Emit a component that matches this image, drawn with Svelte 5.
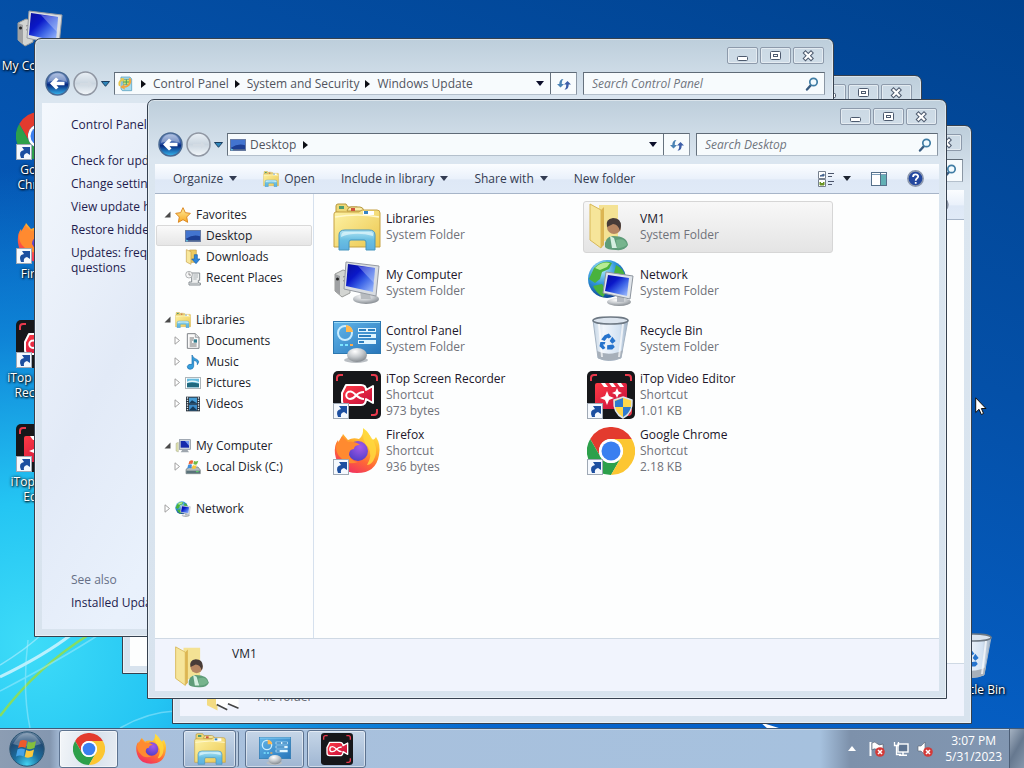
<script>
  const favorites = [
    { label: 'Desktop', icon: 'desktop', selected: true },
    { label: 'Downloads', icon: 'download' },
    { label: 'Recent Places', icon: 'recent' }
  ];
  const libraries = [
    { label: 'Documents', icon: 'document' },
    { label: 'Music', icon: 'music' },
    { label: 'Pictures', icon: 'picture' },
    { label: 'Videos', icon: 'video' }
  ];
  const tree = [
    { label: 'Favorites', icon: 'star', open: true, items: favorites },
    { label: 'Libraries', icon: 'libraries', open: true, items: libraries, expandable: true },
    { label: 'My Computer', icon: 'pc', open: true, items: [{ label: 'Local Disk (C:)', icon: 'disk' }], expandable: true },
    { label: 'Network', icon: 'network', open: false, items: [] }
  ];
  const files = [
    { name: 'Libraries', lines: ['System Folder'], icon: 'libraries' },
    { name: 'VM1', lines: ['System Folder'], icon: 'user', selected: true },
    { name: 'My Computer', lines: ['System Folder'], icon: 'computer' },
    { name: 'Network', lines: ['System Folder'], icon: 'network' },
    { name: 'Control Panel', lines: ['System Folder'], icon: 'cpanel' },
    { name: 'Recycle Bin', lines: ['System Folder'], icon: 'bin' },
    { name: 'iTop Screen Recorder', lines: ['Shortcut', '973 bytes'], icon: 'recorder', shortcut: true },
    { name: 'iTop Video Editor', lines: ['Shortcut', '1.01 KB'], icon: 'editor', shortcut: true, shield: true },
    { name: 'Firefox', lines: ['Shortcut', '936 bytes'], icon: 'firefox', shortcut: true },
    { name: 'Google Chrome', lines: ['Shortcut', '2.18 KB'], icon: 'chrome', shortcut: true }
  ];
  const shortcuts = [
    { label: 'My Computer', icon: 'computer' },
    { label: 'Google Chrome', icon: 'chrome', shortcut: true },
    { label: 'Firefox', icon: 'firefox', shortcut: true },
    { label: 'iTop Screen Recorder', icon: 'recorder', shortcut: true },
    { label: 'iTop Video Editor', icon: 'editor', shortcut: true }
  ];
  const tasks = ['Check for updates', 'Change settings', 'View update history', 'Restore hidden updates', 'Updates: frequently asked questions'];
</script>

{#snippet icon(name, cls)}
  <svg class={cls} viewBox="0 0 48 48" aria-hidden="true"><use href="#i-{name}" /></svg>
{/snippet}

{#snippet bigIcon(item)}
  <svg class="big" viewBox="0 0 48 48" aria-hidden="true">
    <use href="#i-{item.icon}" />
    {#if item.shield}<use href="#i-shield" />{/if}
    {#if item.shortcut}<use href="#i-shortcut" />{/if}
  </svg>
{/snippet}

{#snippet caret()}
  <svg class="caret" viewBox="0 0 8 5" aria-hidden="true"><path d="M0 0H8L4 5Z" fill="currentColor" /></svg>
{/snippet}

{#snippet crumbArrow()}
  <svg class="crumb-arrow" viewBox="0 0 5 8" aria-hidden="true"><path d="M0 0L5 4L0 8Z" fill="#0b0e14" /></svg>
{/snippet}

{#snippet chromeBar(place, crumbs, placeIcon)}
  <header class="titlebar">
    <button aria-label="Minimize"><svg viewBox="0 0 30 17"><rect x="10.500" y="9.500" width="10" height="4" rx="1" fill="#fff" stroke="#4d5a6e" /></svg></button>
    <button aria-label="Maximize"><svg viewBox="0 0 30 17"><rect x="10.500" y="4.500" width="10" height="8" rx="1" fill="#fff" stroke="#4d5a6e" /><rect x="13.500" y="7.500" width="4" height="2" fill="#fff" stroke="#4d5a6e" /></svg></button>
    <button aria-label="Close"><svg viewBox="0 0 30 17"><path d="M12.500 6L18 11.500M18 6L12.500 11.500" stroke="#4d5a6e" stroke-width="4.200" stroke-linecap="square" /><path d="M12.500 6L18 11.500M18 6L12.500 11.500" stroke="#fff" stroke-width="2.200" stroke-linecap="square" /></svg></button>
  </header>
  <div class="navrow">
    <div class="travel">
      <button class="back" aria-label="Back"><svg viewBox="0 0 25 25"><circle cx="12.500" cy="12.500" r="11.500" fill="url(#g-back)" stroke="#4a6a94" stroke-width="1.500" /><path d="M3 11C4 5 8 2.500 12.500 2.500S21 5 22 11C16 8.500 9 9 3 11Z" fill="#fff" opacity=".35" /><path d="M5 12.500L11 6.500L13.500 8.500L11.500 10.700H19.500V14.300H11.500L13.500 16.500L11 18.500Z" fill="#fff" /></svg></button>
      <button class="forward" aria-label="Forward"><svg viewBox="0 0 25 25"><circle cx="12.500" cy="12.500" r="11.500" fill="url(#g-fwd)" stroke="#9097a3" stroke-width="1.500" /><path d="M19 13L15 9.500V12H7V14H15V16.500Z" fill="#d3dbe3" /></svg></button>
      <button class="recent" aria-label="Recent pages"><svg viewBox="0 0 9 6"><path d="M.5.5H8.500L4.500 5.300Z" fill="#2e86bb" stroke="#1c3e60" /></svg></button>
    </div>
    <nav class="address" aria-label="Address">
      {@render icon(placeIcon, 'sm')}
      {#each crumbs as c, i}
        {#if i > 0 || crumbs.length > 1}{@render crumbArrow()}{/if}
        <a href="#{c}">{c}</a>
      {/each}
      {#if crumbs.length === 1}{@render crumbArrow()}{/if}
      <span class="fill"></span>
      <button class="drop" aria-label="Previous locations">{@render caret()}</button>
      <button class="refresh" aria-label="Refresh"><svg viewBox="0 0 16 16"><path d="M1 8L4.500 11.500L8 8H5.800C5.800 5.500 6 4.500 7.500 3C4.500 3 3.300 5 3.300 8Z" fill="#4a82b4" /><path d="M15 8.500L11.500 5L8 8.500H10.200C10.200 11 10 12 8.500 13.700C11.500 13.500 12.700 11.500 12.700 8.500Z" fill="#3d5ea8" /></svg></button>
    </nav>
    <label class="search">
      <input type="text" placeholder={place} aria-label={place || 'Search'} />
      <svg viewBox="0 0 14 14" aria-hidden="true"><path d="M6 8L2 12.500" stroke="#385b80" stroke-width="2.400" stroke-linecap="round" /><circle cx="8.500" cy="5" r="3.700" fill="#f2fbff" stroke="#407da4" stroke-width="1.700" /></svg>
    </label>
  </div>
{/snippet}

<svg class="defs" aria-hidden="true">
  <defs>
    <linearGradient id="g-back" x1="0" y1="0" x2="0" y2="1"><stop offset="0" stop-color="#93abd6" /><stop offset=".45" stop-color="#2a52a4" /><stop offset=".55" stop-color="#07297e" /><stop offset="1" stop-color="#37b8f0" /></linearGradient>
    <linearGradient id="g-fwd" x1="0" y1="0" x2="0" y2="1"><stop offset="0" stop-color="#eaf0f6" /><stop offset=".5" stop-color="#cbd6e0" /><stop offset="1" stop-color="#f3f7fa" /></linearGradient>
    <linearGradient id="g-folder" x1="0" y1="0" x2="1" y2="1"><stop offset="0" stop-color="#fdf3a6" /><stop offset="1" stop-color="#ecc74f" /></linearGradient>
    <linearGradient id="g-tray" x1="0" y1="0" x2="0" y2="1"><stop offset="0" stop-color="#b5e6f4" /><stop offset=".5" stop-color="#69bfe2" /><stop offset="1" stop-color="#5dafe0" /></linearGradient>
    <linearGradient id="g-screen" x1="0" y1="0" x2="1" y2="1"><stop offset="0" stop-color="#0a0f9c" /><stop offset=".35" stop-color="#0a18c8" /><stop offset=".6" stop-color="#3a62e6" /><stop offset="1" stop-color="#a9c6ff" /></linearGradient>
    <linearGradient id="g-panel" x1="0" y1="0" x2="1" y2="1"><stop offset="0" stop-color="#62b6ea" /><stop offset="1" stop-color="#2876ba" /></linearGradient>
    <radialGradient id="g-ball" cx=".4" cy=".25" r=".8"><stop offset="0" stop-color="#fff" /><stop offset=".5" stop-color="#c5c9cd" /><stop offset="1" stop-color="#7e848a" /></radialGradient>
    <radialGradient id="g-globe" cx=".35" cy=".25" r=".8"><stop offset="0" stop-color="#b4ecff" /><stop offset=".5" stop-color="#2e93d8" /><stop offset="1" stop-color="#0b3f8e" /></radialGradient>
    <linearGradient id="g-bin" x1="0" y1="0" x2="1" y2="0"><stop offset="0" stop-color="#c5d5e4" /><stop offset=".3" stop-color="#f1f6fc" /><stop offset=".75" stop-color="#d3e2f2" /><stop offset="1" stop-color="#9fb1c4" /></linearGradient>
    <linearGradient id="g-red" x1="0" y1="0" x2="1" y2="1"><stop offset="0" stop-color="#ff3a44" /><stop offset="1" stop-color="#c30e3d" /></linearGradient>
    <linearGradient id="g-fire" x1=".8" y1="0" x2=".3" y2="1"><stop offset="0" stop-color="#fff04d" /><stop offset=".35" stop-color="#ffb22c" /><stop offset=".65" stop-color="#ff6a35" /><stop offset="1" stop-color="#f12e62" /></linearGradient>
    <radialGradient id="g-purple" cx=".6" cy=".3" r=".8"><stop offset="0" stop-color="#a45ae8" /><stop offset="1" stop-color="#4a3cc4" /></radialGradient>
    <linearGradient id="g-star" x1="0" y1="0" x2="0" y2="1"><stop offset="0" stop-color="#fff0a0" /><stop offset="1" stop-color="#f8a722" /></linearGradient>
    <radialGradient id="g-orb" cx=".5" cy=".95" r=".95"><stop offset="0" stop-color="#43d3f2" /><stop offset=".4" stop-color="#1c6e9e" /><stop offset=".75" stop-color="#1f4a74" /><stop offset="1" stop-color="#7690aa" /></radialGradient>
  </defs>

  <symbol id="i-libraries" viewBox="0 0 48 48">
    <path d="M3 9V3Q3 1 5 1H13L15 4H24L27 6V12Z" fill="#eed878" stroke="#b5973c" />
    <rect x="6" y="3" width="5" height="3" fill="#4d9b70" /><path d="M14 8Q15 4 18 4H27Q30 4 31 8Z" fill="#faedaa" stroke="#b5973c" /><rect x="18" y="5" width="4" height="3" fill="#cf513d" />
    <path d="M1 44V11Q1 9 3 9H26L29 7H44Q47 7 47 10V44Z" fill="url(#g-folder)" stroke="#c5a145" />
    <rect x="30" y="8" width="11" height="4" fill="#fff" /><rect x="31" y="8" width="4" height="3" fill="#3685c4" />
    <path d="M2 14Q25 10 46 14" fill="none" stroke="#fff8cc" stroke-width="1.500" />
    <path d="M6 47V32Q6 27 12 27H36Q42 27 42 32V47H33V39Q33 37 31 37H18Q16 37 16 39V47Z" fill="url(#g-tray)" stroke="#4896bd" />
    <path d="M8 34Q22 28 40 33V31Q40 29 36 29H12Q8 29 8 34Z" fill="#e2f8fc" opacity=".7" />
  </symbol>
  <symbol id="i-computer" viewBox="0 0 48 48">
    <path d="M2 15L10 11L17 13V34L9 38L2 32Z" fill="#d3d5d2" stroke="#9a9c99" /><path d="M2 15L7 17V36L2 32Z" fill="#9fa1a3" /><circle cx="4.500" cy="20" r="1.500" fill="#222" /><path d="M10 18L16 16M10 22L16 20" stroke="#888" />
    <ellipse cx="33" cy="40" rx="13" ry="5" fill="url(#g-ball)" /><path d="M27 31H36L38 40H28Z" fill="#b8bcc0" />
    <path d="M13 3L46 7L43 37L11 30Z" fill="#d9dde2" stroke="#969ba2" /><path d="M15 5L42 9L40 33L13 27Z" fill="url(#g-screen)" /><path d="M25 7L42 9L41 24Q34 17 25 7Z" fill="#dae5ff" opacity=".35" />
  </symbol>
  <symbol id="i-pc" viewBox="0 0 48 48">
    <path d="M3 16L10 13V42L3 39Z" fill="#dfe2ae" stroke="#8c9078" /><rect x="13" y="5" width="33" height="29" fill="#cdd4dc" stroke="#7d8794" stroke-width="2" /><rect x="17" y="9" width="25" height="20" fill="#152aac" /><path d="M30 9H42V23Z" fill="#7499f0" /><path d="M22 35H37L42 43H17Z" fill="#9ea6ae" />
  </symbol>
  <symbol id="i-network" viewBox="0 0 48 48">
    <circle cx="20" cy="20" r="19" fill="url(#g-globe)" /><path d="M7 9Q16 0 25 4L22 10L15 13L13 20L8 24L2 20ZM29 6Q37 10 38 17L31 20L27 14ZM6 27L15 25L20 32L16 38Q9 34 6 27Z" fill="#49b23d" /><path d="M8 9Q15 2 23 4L20 8L13 11Z" fill="#b7eb94" />
    <ellipse cx="32" cy="43" rx="12" ry="4" fill="url(#g-ball)" /><path d="M30 36H37V43H30Z" fill="#b4b9c0" /><path d="M19 13L46 17L43 40L16 34Z" fill="#dfe4ea" stroke="#8d959e" /><path d="M21 16L42 19L40 37L18 32Z" fill="url(#g-screen)" />
  </symbol>
  <symbol id="i-cpanel" viewBox="0 0 48 48">
    <rect x=".5" y="6.500" width="47" height="32" fill="url(#g-panel)" stroke="#2c78b0" /><path d="M1 7H47V8H1Z" fill="#9bdcfa" />
    <circle cx="12" cy="18" r="7" fill="none" stroke="#c9edff" stroke-width="2" /><path d="M13 17V10A8 8 0 0 1 20 17Z" fill="#ffb84f" />
    <path d="M25 15H43M25 21H43M25 27H43" stroke="#e0f5ff" stroke-width="4" /><path d="M26 15H33M35 15H42M26 21H38M26 27H31" stroke="#2d7fbf" stroke-width="2" /><path d="M7 30H10M12 30H15" stroke="#7ce4ff" stroke-width="2" /><path d="M17 30H20" stroke="#ffab4d" stroke-width="2" />
    <ellipse cx="23" cy="45" rx="12" ry="3" fill="#b9bec3" /><ellipse cx="24" cy="40" rx="10" ry="7" fill="url(#g-ball)" />
  </symbol>
  <symbol id="i-bin" viewBox="0 0 48 48">
    <path d="M6 5L11 43Q22 48 34 43L41 5Z" fill="url(#g-bin)" stroke="#a6b5c5" /><path d="M10 36L11 43Q22 48 34 43L36 35Q23 42 10 36Z" fill="#a7b0ba" /><ellipse cx="23.500" cy="5.500" rx="17.500" ry="3.500" fill="#dbe4ee" stroke="#6d7883" stroke-width="1.500" /><path d="M36 9L32 42M12 9L15 42" stroke="#fff" opacity=".7" stroke-width="2" />
    <g transform="translate(4 4) scale(.85)"><path d="M16 19L21 17L24 21L21 23L19 22L16 26L12 24ZM25 21L29 26L25 29L22 26ZM11 27H17L16 30H14L17 34L14 36L10 32ZM19 31L26 30L28 33L25 36H19Z" fill="#2674cd" /></g>
  </symbol>
  <symbol id="i-user" viewBox="0 0 48 48">
    <path d="M12 2H31V38H12Z" fill="#f4e294" /><path d="M3 1L14 7V45L3 37Z" fill="#f6e59a" stroke="#d8b857" /><path d="M14 7L17 4V42L14 45Z" fill="#dcb552" />
    <circle cx="27" cy="24" r="7" fill="#b58562" /><path d="M20 24Q18 16 26 15Q34 15 34 23L33 28Q31 21 26 21Z" fill="#473b38" /><path d="M18 44Q17 34 26 33Q40 33 41 42Q38 48 29 47Q20 47 18 44Z" fill="#5e9c79" /><path d="M23 33L27 35L30 45H25Z" fill="#d5efe1" /><path d="M29 37Q38 34 40 42Q35 46 30 45Z" fill="#76b48d" />
  </symbol>
  <symbol id="i-recorder" viewBox="0 0 48 48">
    <rect width="48" height="48" rx="5" fill="#16171a" /><path d="M4 10V7Q4 4 7 4H10M38 4H41Q44 4 44 7V10M44 38V41Q44 44 41 44H38" fill="none" stroke="#e8394c" stroke-width="2" />
    <path d="M13 14H28Q33 14 33 19L40 15V32L33 28Q33 34 28 34H13Q9 34 9 30V22L13 14Z" fill="url(#g-red)" stroke="#fff" stroke-width="2" stroke-linejoin="round" /><path d="M31 28Q27 28 23 24T17 20.500A3.700 3.700 0 0 0 17 28Q20 28 23 24.500T31 21" fill="none" stroke="#fff" stroke-width="2" />
  </symbol>
  <symbol id="i-editor" viewBox="0 0 48 48">
    <rect width="48" height="48" rx="5" fill="#16171a" /><path d="M4 10V7Q4 4 7 4H10M38 4H41Q44 4 44 7V10M44 38V41Q44 44 41 44H38" fill="none" stroke="#e8394c" stroke-width="2" />
    <rect x="8" y="12" width="32" height="26" rx="2" fill="url(#g-red)" /><path d="M14 12H18L21 16H17ZM22 12H26L29 16H25ZM30 12H34L37 16H33Z" fill="#fff" /><path d="M20 20L22 25L27 27L22 29L20 34L18 29L13 27L18 25ZM30 17L31.500 20.500L35 22L31.500 23.500L30 27L28.500 23.500L25 22L28.500 20.500Z" fill="#fff" />
  </symbol>
  <symbol id="i-shield" viewBox="0 0 48 48"><path d="M36 26L45 29Q46 42 36 47Q26 42 27 29Z" fill="#ffd84c" stroke="#dce5ee" stroke-width="1.500" /><path d="M36 27V36H28L28 30ZM36 36H44Q42 43 36 46Z" fill="#2f7bd0" /></symbol>
  <symbol id="i-shortcut" viewBox="0 0 48 48"><rect x=".5" y="32.500" width="15" height="15" fill="#f5f9fe" stroke="#9fa9b5" /><path d="M5 46Q2 39 8 38L6 35H14V43L11 41Q7 42 8 46Z" fill="#1c4fa0" /></symbol>
  <symbol id="i-firefox" viewBox="0 0 48 48">
    <path d="M30 1Q37 6 38 12Q41 14 43 10Q48 17 46 28Q43 46 24 46Q5 46 2 27Q1 18 5 13L6 17L10 7L15 13Q20 10 26 12Q31 8 30 1Z" fill="url(#g-fire)" /><circle cx="25" cy="24" r="10" fill="url(#g-purple)" /><path d="M3 19L9 9L15 15Q22 14 27 18Q21 18 21 22Q16 22 16 28Q18 34 25 35Q14 39 8 31Q3 27 3 19Z" fill="#ff8a30" /><path d="M30 2Q47 16 42 30Q39 38 34 38Q40 28 35 20Q29 15 30 2Z" fill="#ffd83d" opacity=".85" />
  </symbol>
  <symbol id="i-chrome" viewBox="0 0 48 48">
    <path d="M24 12H44.800A24 24 0 0 0 3.200 12L13.600 30A12 12 0 0 1 24 12Z" fill="#e33b2e" /><path d="M3.200 12A24 24 0 0 0 24 48L34.400 30A12 12 0 0 1 13.600 30Z" fill="#2da04b" /><path d="M44.800 12A24 24 0 0 1 24 48L34.400 30A12 12 0 0 0 24 12Z" fill="#fcc631" /><circle cx="24" cy="24" r="12" fill="#fff" /><circle cx="24" cy="24" r="9.500" fill="#3a7ff0" />
  </symbol>
  <symbol id="i-star" viewBox="0 0 48 48"><path d="M24 2L31 17L46 19L35 30L38 46L24 38L10 46L13 30L2 19L17 17Z" fill="url(#g-star)" stroke="#dc8a24" stroke-width="3" stroke-linejoin="round" /></symbol>
  <symbol id="i-desktop" viewBox="0 0 48 48"><rect x="1" y="7" width="46" height="34" fill="#1d3f94" stroke="#6a7c9c" stroke-width="2" /><path d="M3 9H45V25Q25 18 3 32Z" fill="#4374cf" /><path d="M2 37H46V40H2Z" fill="#5f7592" /><path d="M2 34L10 38L5 41Z" fill="#67d3ef" /></symbol>
  <symbol id="i-download" viewBox="0 0 48 48"><path d="M14 3H34V40H14Z" fill="#ecca60" stroke="#c9a14a" stroke-width="2" /><path d="M4 2L18 8V46L4 39Z" fill="#f8e79b" stroke="#c9a14a" stroke-width="2" /><path d="M28 17H37V30H45L33 44L20 30H28Z" fill="#2c86dc" stroke="#175ca8" stroke-width="2" /></symbol>
  <symbol id="i-recent" viewBox="0 0 48 48"><path d="M20 9H44V31H40V39H46V45H12V36H20Z" fill="#eef0f0" stroke="#858c91" stroke-width="3" /><path d="M25 15H39M25 21H39M25 27H35M15 40H39" stroke="#8e969c" stroke-width="2" /><circle cx="12" cy="14" r="10" fill="#f6f6f6" stroke="#8f9497" stroke-width="2" /><path d="M12 7V15H18" fill="none" stroke="#666" stroke-width="2" /></symbol>
  <symbol id="i-document" viewBox="0 0 48 48"><path d="M7 2H31L42 13V46H7Z" fill="#fafafa" stroke="#808488" stroke-width="3" /><path d="M31 2V13H42" fill="#dcdfe1" stroke="#808488" stroke-width="2" /><path d="M14 15H27M14 21H25M14 27H21M14 33H35M14 39H35" stroke="#777" stroke-width="3" /><rect x="26" y="19" width="10" height="10" fill="#337d8e" /></symbol>
  <symbol id="i-music" viewBox="0 0 48 48"><path d="M21 3Q25 14 37 17Q45 22 37 32Q39 22 26 19V37Q25 46 15 46Q6 45 7 37Q9 29 21 31Z" fill="#359fdd" stroke="#1769ac" stroke-width="2" /></symbol>
  <symbol id="i-picture" viewBox="0 0 48 48"><rect x="2" y="7" width="44" height="34" fill="#fff" stroke="#859096" stroke-width="2" /><rect x="6" y="11" width="36" height="26" fill="#65bce0" /><path d="M6 25Q17 19 42 26V37H6Z" fill="#20697f" /><path d="M6 20Q20 13 42 21V24Q20 18 6 24Z" fill="#e7f7f9" /></symbol>
  <symbol id="i-video" viewBox="0 0 48 48"><rect x="3" y="2" width="42" height="44" fill="#27323d" /><rect x="12" y="5" width="24" height="17" fill="#469dd5" /><rect x="12" y="26" width="24" height="17" fill="#3c8bc7" /><path d="M12 22L21 13L36 22ZM12 43L24 31L36 43Z" fill="#163c5b" /><path d="M7.500 4V46M40.500 4V46" stroke="#dfe6ea" stroke-width="4" stroke-dasharray="4 3" /></symbol>
  <symbol id="i-disk" viewBox="0 0 48 48"><path d="M3 31L12 24H39L46 33V44H3Z" fill="#b4bcbc" stroke="#6d777a" stroke-width="2" /><path d="M4 35H45V43H4Z" fill="#59727a" /><path d="M33 38H41" stroke="#58e064" stroke-width="3" /><path d="M13 7Q19 2 25 5L22 15Q16 12 10 17Z" fill="#ed6539" /><path d="M27 6Q33 9 40 5L36 16Q31 19 25 15Z" fill="#70ba43" /><path d="M9 19Q15 14 21 17L18 28Q13 25 7 29Z" fill="#3f8fdb" /><path d="M24 18Q29 21 35 18L32 28Q27 31 21 28Z" fill="#fac733" /></symbol>
  <symbol id="i-update" viewBox="0 0 48 48"><path d="M12 3H39L44 9V44H16L12 39Z" fill="#a7dcee" stroke="#4a95b6" stroke-width="2" /><path d="M18 10H38V26H18Z" fill="#d6e36a" stroke="#528b9b" stroke-width="2" /><path d="M18 18H38M28 10V26" stroke="#47a065" stroke-width="3" /><path d="M40 6C48 18 38 35 22 35L25 41L9 33L23 24L22 30C33 29 40 20 35 7Z" fill="#f4a63d" /><path d="M6 31Q0 18 12 10L10 6L22 7L18 18L15 14Q8 19 11 29Z" fill="#e8c74f" /></symbol>
</svg>

<main class="desktop">
  <svg class="wallpaper" viewBox="0 0 1024 768" preserveAspectRatio="none" aria-hidden="true">
    <path d="M0 716Q38 666 90 634" fill="none" stroke="#86dd62" stroke-width="2.500" />
    <path d="M0 677Q45 655 72 634" fill="none" stroke="#d9f6ff" stroke-width="3" opacity=".8" /><path d="M0 665Q25 650 42 634" fill="none" stroke="#b6efff" stroke-width="1.500" opacity=".6" />
    <path d="M0 691Q60 660 100 634M120 728Q148 712 175 711M30 728Q22 690 28 640" fill="none" stroke="#b6efff" stroke-width="1.500" opacity=".45" />
    <path d="M760 722L782 729H768Z" fill="#fff" />
  </svg>

  <div class="shortcuts">
    {#each shortcuts as s}
      <a class="shortcut" href="#{s.label}">{@render bigIcon(s)}<span>{s.label}</span></a>
    {/each}
  </div>
  <a class="shortcut recycle" href="#recycle">{@render bigIcon({ icon: 'bin' })}<span>Recycle Bin</span></a>

  <section class="window w-back" aria-label="Background window">
    {@render chromeBar('', [], 'desktop')}
    <div class="body"></div>
  </section>

  <section class="window w-folder" aria-label="Folder window">
    {@render chromeBar('', [], 'desktop')}
    <div class="toolbar"><span class="fill"></span>
      <button aria-label="Help" class="help"><svg viewBox="0 0 16 16"><circle cx="8" cy="8" r="7" fill="#c9d3e4" stroke="#8b94a5" stroke-width="1.500" /></svg></button>
    </div>
    <div class="body"></div>
    <footer class="details">
      <svg class="thumb" viewBox="0 0 48 48" aria-hidden="true"><path d="M4 2L18 8V46L4 39Z" fill="#f3db82" /><path d="M16 20L31 26V44L16 38ZM31 20L46 26V43L31 36Z" fill="#fff" /><path d="M17 38L31 45M32 37L46 43" stroke="#444" stroke-width="2" /></svg>
      <div class="meta"><span>File folder</span></div>
    </footer>
  </section>

  <section class="window w-update" aria-label="Windows Update">
    {@render chromeBar('Search Control Panel', ['Control Panel', 'System and Security', 'Windows Update'], 'update')}
    <div class="body">
      <aside class="tasks">
        <a class="home" href="#home">Control Panel Home</a>
        {#each tasks as t}<a href="#{t}">{t}</a>{/each}
        <span class="fill"></span>
        <h2>See also</h2>
        <a href="#installed">Installed Updates</a>
      </aside>
    </div>
  </section>

  <section class="window w-desktop" aria-label="Desktop">
    {@render chromeBar('Search Desktop', ['Desktop'], 'desktop')}
    <div class="toolbar">
      <button>Organize {@render caret()}</button>
      <button>{@render icon('libraries', 'sm')} Open</button>
      <button>Include in library {@render caret()}</button>
      <button>Share with {@render caret()}</button>
      <button>New folder</button>
      <span class="fill"></span>
      <div class="tools">
        <button aria-label="Change your view">
          <svg class="sm" viewBox="0 0 16 16"><path d="M.5.500H7.500V7.500H.5ZM.5 8.500H7.500V15.500H.5Z" fill="#fff" stroke="#76808e" /><path d="M2 5H6V3L4 4Z" fill="#43638e" stroke="#43638e" /><path d="M2 11L4 13L6 11V14H2Z" fill="#6b9424" stroke="#6b9424" /><path d="M10 2.500H16M10 5.500H14M10 10.500H16M10 13.500H14" stroke="#4c566c" /></svg>
          {@render caret()}
        </button>
        <button aria-label="Show the preview pane"><svg class="sm" viewBox="0 0 16 16"><rect x=".5" y="1.500" width="15" height="13" fill="#fff" stroke="#55708a" /><path d="M1 3.500H15" stroke="#7e9eb9" /><rect x="10" y="4" width="5" height="10" fill="#63b0b5" /><path d="M9.500 2V14" stroke="#55708a" /></svg></button>
        <button aria-label="Help" class="help"><svg viewBox="0 0 16 16"><circle cx="8" cy="8" r="7.200" fill="#24489f" stroke="#8c98ae" stroke-width="1.500" /><path d="M5.700 6.500C5.700 3.300 10.500 3.500 10.500 6.200C10.500 8 8.200 7.700 8.200 10M8.200 11.300V13" fill="none" stroke="#fff" stroke-width="1.700" /></svg></button>
      </div>
    </div>
    <div class="body">
      <nav class="tree" aria-label="Folders">
        {#each tree as group}
          <ul>
            <li>
              <a href="#{group.label}">
                {#if group.open}<svg class="twist" viewBox="0 0 7 7"><path d="M6.500.5V6.500H.5Z" fill="#4a4a4a" /></svg>{:else}<svg class="twist" viewBox="0 0 7 9"><path d="M1 .8L5.500 4.500L1 8.200Z" fill="#fff" stroke="#a0a0a0" /></svg>{/if}
                {@render icon(group.icon, 'sm')}<span>{group.label}</span>
              </a>
            </li>
            {#each group.items as item}
              <li>
                <a class="child" class:selected={item.selected} href="#{item.label}">
                  <svg class="twist" viewBox="0 0 7 9">{#if group.expandable}<path d="M1 .8L5.500 4.500L1 8.200Z" fill="#fff" stroke="#a0a0a0" />{/if}</svg>
                  {@render icon(item.icon, 'sm')}<span>{item.label}</span>
                </a>
              </li>
            {/each}
          </ul>
        {/each}
      </nav>
      <div class="files">
        {#each files as f}
          <a class="tile" class:selected={f.selected} href="#{f.name}">
            {@render bigIcon(f)}
            <span class="info"><span class="name">{f.name}</span>{#each f.lines as l}<span>{l}</span>{/each}</span>
          </a>
        {/each}
      </div>
    </div>
    <footer class="details">
      {@render icon('user', 'thumb')}
      <div class="meta"><span class="title">VM1</span></div>
    </footer>
  </section>

  <svg class="pointer" viewBox="0 0 12 19" aria-hidden="true"><path d="M.7.800V15.500L4 12.300L6.300 17.500L8.600 16.500L6.400 11.500H11Z" fill="#fff" stroke="#111" /></svg>

  <footer class="taskbar">
    <button class="orb" aria-label="Start">
      <svg viewBox="0 0 36 36"><circle cx="18" cy="18" r="17.200" fill="url(#g-orb)" stroke="#2b5572" /><path d="M4 13Q10 2 18 2T32 13Q18 18 4 13Z" fill="#fff" opacity=".25" /><path d="M11 10Q14 8 18 10L16.500 17Q13 15 9 17Z" fill="#ee5a2c" /><path d="M19 10.500Q23 12.500 27 10L25.500 17Q21.500 19 17.500 17.500Z" fill="#84bf3c" /><path d="M8.500 18.500Q12 16.500 16 18.500L14.500 25.500Q11 23.500 7 25.500Z" fill="#45a3e8" /><path d="M17.200 19Q21 21 25 18.500L23.500 25.500Q19.500 27.500 15.700 26Z" fill="#fcc93c" /></svg>
    </button>
    <button class="task active" aria-label="Google Chrome">{@render icon('chrome', 'app')}</button>
    <button class="task idle" aria-label="Firefox">{@render icon('firefox', 'app')}</button>
    <button class="task stack" aria-label="Windows Explorer">{@render icon('libraries', 'app')}</button>
    <button class="task" aria-label="Control Panel">{@render icon('cpanel', 'app')}</button>
    <button class="task" aria-label="iTop Screen Recorder">{@render icon('recorder', 'app')}</button>
    <span class="fill"></span>
    <div class="tray">
      <button aria-label="Show hidden icons"><svg class="up" viewBox="0 0 8 5"><path d="M4 0L8 5H0Z" fill="#fff" /></svg></button>
      <button aria-label="Action Center"><svg class="sm" viewBox="0 0 16 16"><path d="M1.500 1V15" stroke="#fff" stroke-width="2" /><path d="M3 2Q6 0 8 2.500T14 3V9Q11 10 8 8.500T3 9Z" fill="#fff" stroke="#4d5563" stroke-width=".6" /><circle cx="11" cy="11" r="4.800" fill="#d43a38" /><path d="M9 9L13 13M13 9L9 13" stroke="#fff" stroke-width="1.500" /></svg></button>
      <button aria-label="Network"><svg class="sm" viewBox="0 0 16 16"><rect x="5" y="3" width="10" height="8" fill="#5f7592" stroke="#fff" stroke-width="1.400" /><path d="M10 11V14M6 14.300H14" stroke="#fff" stroke-width="1.500" /><path d="M1.500 1V4.500H5.500V1M3.500 5V13.500H8" fill="none" stroke="#fff" stroke-width="1.300" /></svg></button>
      <button aria-label="Volume"><svg class="sm" viewBox="0 0 16 16"><path d="M1 5H4L8 1V14L4 10H1Z" fill="#fff" stroke="#59616e" stroke-width=".6" /><circle cx="11" cy="11" r="4.800" fill="#d43a38" /><path d="M9 9L13 13M13 9L9 13" stroke="#fff" stroke-width="1.500" /></svg></button>
      <time datetime="2023-05-31T15:07"><span>3:07 PM</span><span>5/31/2023</span></time>
    </div>
    <button class="peek" aria-label="Show desktop"></button>
  </footer>
</main>

<style>
  :global(body) { margin: 0; }
  * { box-sizing: border-box; }
  button { font: inherit; color: inherit; border: 0; padding: 0; background: none; }
  a { color: inherit; text-decoration: none; }
  svg { display: block; flex: none; }
  .defs { position: absolute; width: 0; height: 0; }
  .fill { flex: 1; }
  .sm { width: 16px; height: 16px; }
  .big { width: 48px; height: 48px; }
  .caret { width: 8px; height: 5px; }
  .crumb-arrow { width: 5px; height: 8px; }

  .desktop {
    position: relative;
    display: flex;
    flex-direction: column;
    justify-content: space-between;
    min-height: 100vh;
    overflow: hidden;
    font: 12px/16px "Open Sans", "Noto Sans", sans-serif;
    color: #1b1d2b;
    background:
      radial-gradient(ellipse 45% 62% at 3% 84%, #3edcf8 0%, #24c5f3 30%, rgb(18 148 224 / .7) 65%, rgb(10 96 196 / 0) 100%),
      linear-gradient(200deg, #00428f 0%, #0450a8 35%, #0562cb 75%, #0874da 100%);
  }
  .wallpaper { position: absolute; inset: 0; width: 100%; height: 100%; }

  .shortcuts { position: relative; display: flex; flex-direction: column; padding-top: 8px; }
  .shortcut {
    display: flex; flex-direction: column; align-items: center; gap: 2px;
    width: 80px; height: 104px;
    color: #fff; text-align: center; line-height: 15px;
    text-shadow: 1px 1px 2px #000, 0 0 3px #000;
  }
  .recycle { position: absolute; right: 10px; bottom: 32px; }

  .window {
    position: absolute;
    display: flex; flex-direction: column;
    width: 800px; height: 599px;
    padding: 0 7px 7px;
    border: 1px solid #36414f;
    border-radius: 7px 7px 0 0;
    background: linear-gradient(#bdcedb 0, #dbe6f0 60px, #d8e3ee 100%);
    box-shadow: inset 0 0 0 1px rgb(255 255 255 / .45);
    overflow: hidden;
  }
  .w-back { left: 122px; top: 75px; }
  .w-folder { left: 172px; top: 125px; }
  .w-update { left: 34px; top: 38px; }
  .w-desktop { left: 147px; top: 99px; height: 600px; }

  .titlebar { display: flex; justify-content: flex-end; align-items: flex-start; gap: 2px; height: 33px; flex: none; padding: 8px 2px 0 0; }
  .titlebar button { width: 31px; height: 17px; border: 1px solid #8d9aab; border-radius: 2px; background: rgb(214 225 236 / .5); box-shadow: inset 0 0 0 1px rgb(255 255 255 / .45); }
  .titlebar svg { width: 30px; height: 17px; margin: -1px; }

  .navrow { display: flex; align-items: center; gap: 6px; height: 23px; flex: none; margin: 0 1px 8px 3px; }
  .travel { display: flex; align-items: center; gap: 3px; margin-right: -2px; }
  .back svg, .forward svg { width: 25px; height: 25px; }
  .recent svg { width: 9px; height: 6px; }
  .address, .search { height: 23px; border: 1px solid #66727e; border-color: #5f6b77 #8b97a4 #b4c0cc #66727e; background: #f7fbfd; }
  .address { flex: 1; display: flex; align-items: center; padding-left: 2px; color: #50545d; min-width: 0; }
  .address a { margin: 0 7px 0 4px; }
  .address .crumb-arrow + a { margin: 0 6px 0 7px; }
  .address .sm + .crumb-arrow { margin-left: 8px; }
  .drop { padding: 0 6px; color: #0b0e2a; }
  .refresh { align-self: stretch; width: 26px; border-left: 1px solid #66727e; display: grid; place-items: center; }
  .refresh svg { width: 16px; height: 16px; }
  .search { width: 242px; display: flex; align-items: center; padding: 0 5px 0 8px; }
  .search input { flex: 1; min-width: 0; border: 0; padding: 0; background: none; font: inherit; font-style: italic; }
  .search input::placeholder { color: #70757d; opacity: 1; }
  .search svg { width: 14px; height: 14px; }

  .toolbar {
    display: flex; align-items: center; gap: 26px; height: 30px; flex: none;
    padding: 0 15px 0 18px; color: #343c52;
    border-bottom: 1px solid #a7b5c8;
    background: linear-gradient(#fbfdff, #eaf1fb 50%, #dee8f6 55%, #e0eaf7);
  }
  .toolbar button { display: flex; align-items: center; gap: 5px; }
  .toolbar .caret { margin-left: 1px; }
  .tools { display: flex; align-items: center; gap: 20px; }
  .tools .caret { margin-left: 4px; color: #1e2430; }
  .help svg { width: 17px; height: 17px; }

  .body { flex: 1; display: flex; min-height: 0; background: #fdfefe; }
  .details { display: flex; gap: 17px; height: 53px; flex: none; padding: 7px 18px 4px; border-top: 1px solid #cfd9e4; background: #f1f4fd; }
  .thumb { width: 42px; height: 42px; }
  .meta { display: flex; flex-direction: column; }
  .w-folder .meta { padding-top: 18px; color: #6b6f78; }
  .w-folder .thumb { width: 36px; height: 42px; margin: 2px 0 0 6px; }

  .tasks { display: flex; flex-direction: column; gap: 8px; width: 190px; padding: 14px 12px 19px 29px; line-height: 15px; color: #1e1c4e; background: linear-gradient(120deg, #f4f8fd, #e2eaf7 45%, #e9f1fc 75%, #e6effb); }
  .tasks .home { margin-bottom: 13px; }
  .tasks h2 { margin: 0; font: inherit; color: #666f86; }

  .tree { width: 159px; flex: none; padding: 10px 1px; border-right: 1px solid #d6e1ee; }
  .tree ul { margin: 0 0 21px; padding: 0; list-style: none; }
  .tree a { display: flex; align-items: center; gap: 4px; height: 21px; padding-left: 7px; border: 1px solid transparent; border-radius: 2px; white-space: nowrap; }
  .tree a.child { padding-left: 17px; }
  .tree a.selected { border-color: #d9d9d9; background: linear-gradient(#fafafa, #e6e6e6); }
  .tree span { margin-left: 1px; }
  .twist { width: 7px; height: 9px; }

  .files { flex: 1; display: grid; grid-template-columns: repeat(auto-fill, 250px); align-content: start; gap: 4px; padding: 7px 15px; }
  .tile { display: flex; align-items: center; gap: 5px; height: 52px; padding-left: 3px; border: 1px solid transparent; border-radius: 3px; }
  .tile.selected { border-color: #d6d6d6; background: linear-gradient(#f8f8f8, #e4e4e4); }
  .info { display: flex; flex-direction: column; color: #70727a; }
  .name { color: #20162a; }

  .pointer { position: absolute; left: 975px; top: 397px; width: 12px; height: 19px; }

  .taskbar {
    position: relative;
    display: flex; align-items: center; gap: 3px; height: 40px;
    border-top: 1px solid #405a78;
    box-shadow: inset 0 1px 0 #c6d8ea;
    background: linear-gradient(90deg, #8c9db3 0, #8497b0 50px, #a9c0dc 62px, #a6c1de 820px, #7d91ab 850px, #8297b2 100%);
  }
  .orb { width: 56px; padding-left: 9px; }
  .orb svg { width: 36px; height: 36px; }
  .task { display: grid; place-items: center; width: 59px; height: 38px; border: 1px solid #5d7390; border-radius: 3px; background: linear-gradient(#c6d6e8, #9fb6d2); box-shadow: inset 0 0 0 1px rgb(255 255 255 / .5); }
  .task.active { background: linear-gradient(100deg, #f3f6f9, #d7e1ec 60%, #e8edf3); }
  .task.idle { border-color: transparent; background: none; box-shadow: none; }
  .task.stack { width: 53px; margin-right: 6px; box-shadow: inset 0 0 0 1px rgb(255 255 255 / .5), 3px 0 0 -1px #b6c9df, 4px 0 0 -1px #5d7390; }
  .app { width: 32px; height: 32px; }
  .tray { display: flex; align-items: center; gap: 8px; color: #fff; }
  .up { width: 8px; height: 5px; margin-right: 5px; }
  .tray time { display: flex; flex-direction: column; text-align: center; margin: 0 4px; }
  .peek { width: 15px; height: 39px; border-left: 1px solid #4c5e76; background: linear-gradient(120deg, #a5b2c2, #66788f 50%, #8697ac); }
</style>
